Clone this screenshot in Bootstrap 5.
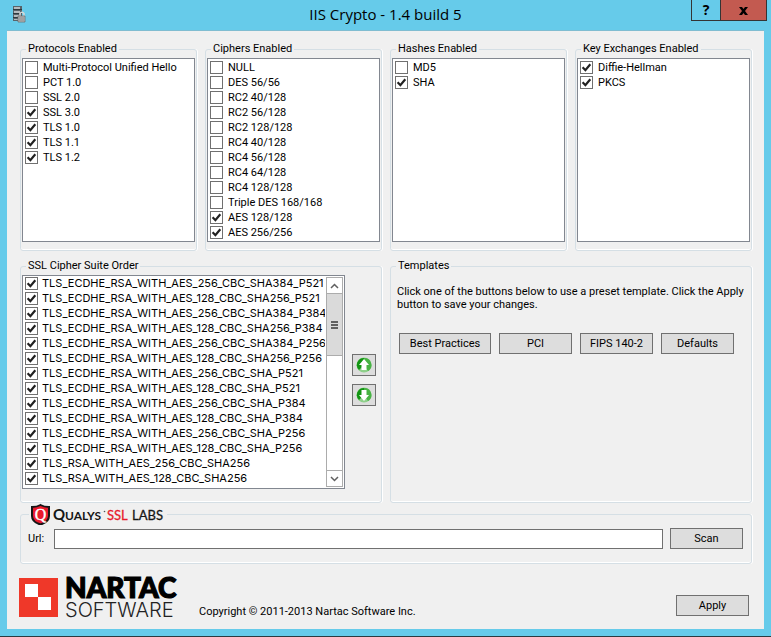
<!DOCTYPE html>
<html lang="en">
<head>
<meta charset="utf-8">
<meta name="viewport" content="width=device-width, initial-scale=1">
<title>IIS Crypto - 1.4 build 5</title>
<link href="https://cdn.jsdelivr.net/npm/bootstrap@5.3.0/dist/css/bootstrap.min.css" rel="stylesheet">
<style>
body { background: #66cbea; font: 11px/15px Roboto, "Liberation Sans", sans-serif; color: #000; border-bottom: 1px solid #2b3a40; }
.titlebar { height: 30px; }
.titlebar h1 { font: 15px/28px "Open Sans", sans-serif; }
.caption-btn { height: 21px; border: 1px solid #343434; border-top: 0; background: #66cbea; width: 30px; font: bold 14px/18px "Open Sans", sans-serif; padding: 0; }
.caption-close { width: 47px; background: #c35a50; margin-left: -1px; }
.caption-set { padding-right: 4px; }
.client { background: #f0f0f0; margin: 0 7px 7px; padding: 10px 12px 11px 13px; border-top: 1px solid #80bdd1; }
.group { border: 1px solid #d5dfe5; border-radius: 3px; box-shadow: inset 0 -1px #fff, 1px 0 #fff; padding: 1px 1px 8px; min-width: 0; }
.group > legend { float: none; width: auto; margin: 0 0 0 4px; padding: 0 2px; font-size: 11px; line-height: 16px; }
.listbox { border: 1px solid #828790; background: #fff; padding: 1px 2px; height: 184px; overflow: hidden; white-space: nowrap; }
.suites { height: 214px; padding: 0 0 0 2px; font-family: Inter, sans-serif; min-width: 0; }
.suite-group { padding-bottom: 13px; }
.second-row { margin-top: 7px; }
.movers { margin: 0 4px 4px 7px; }
.entry { display: flex; align-items: center; gap: 5px; height: 15px; }
.suites .entry { gap: 4px; }
.tick { appearance: none; flex: none; width: 13px; height: 13px; margin: 0; border: 1px solid #707070; background: #fff; }
.tick:checked { background: #fff url("data:image/svg+xml,%3Csvg xmlns='http://www.w3.org/2000/svg' viewBox='0 0 11 11'%3E%3Cpath d='M1.6 5.2 4.4 8.2 9.3 2.2' fill='none' stroke='%23212121' stroke-width='2.2'/%3E%3C/svg%3E"); }
.push { border: 1px solid #707070; background: #ddd; color: #000; height: 21px; width: 73px; padding: 0; line-height: 19px; }
.push-wide { width: 92px; }
.push-icon { width: 24px; height: 22px; }
.scroller { width: 17px; border: 1px solid #acacac; border-top: 0; margin: 1px; flex: none; }
.scroller button { height: 16px; border: 0; border-top: 1px solid #acacac; background: #fff; padding: 0; }
.scroller .thumb { height: 63px; background: #dadada; border: solid #acacac; border-width: 1px 0; }
.templates { padding: 10px 5px 0; }
.hint { line-height: 13px; }
.preset-row { margin-top: 22px; padding-left: 2px; }
.url-label { width: 26px; }
.url-box { border: 1px solid #707070; background: #fff; height: 20px; min-width: 0; padding: 0 3px; }
.group > .brand { margin-left: 7px; line-height: 0; }
.scan { padding: 2px 7px 6px 6px; }
.scan-btn { margin-left: 7px; }
.foot { padding-top: 14px; }
.foot svg { overflow: visible; }
.apply { margin: 0 3px 2px 0; }
.copyright { margin-left: 15px; line-height: 12px; }
</style>
<script src="https://cdn.jsdelivr.net/npm/bootstrap@5.3.0/dist/js/bootstrap.bundle.min.js"></script>
</head>
<body>
<header class="titlebar d-flex align-items-start">
  <div class="flex-fill w-25 ps-2">
    <svg class="d-block ms-1 mt-1" width="16" height="20" viewBox="0 0 16 20" aria-hidden="true">
      <path d="M1 2h9v15H1z" fill="#58636a"/><path d="M2 3h6v2H2zM2 7h6v2H2zM2 11h5v2H2zM2 15h4v1H2z" fill="#b6bbbe"/><path d="M1 5h9v1H1zM1 9h9v1H1zM1 13h7v1H1z" fill="#30383d"/>
      <path d="M8 12V9.500q2-2.500 4 0V12" fill="none" stroke="#d8d8d8" stroke-width="1.500"/><path d="M6 12h7v6H6z" fill="#b9babb" stroke="#666" stroke-width=".7"/><path d="M7 14h5M7 16h5" stroke="#888"/>
    </svg>
  </div>
  <h1 class="m-0">IIS Crypto - 1.4 build 5</h1>
  <div class="flex-fill w-25 d-flex justify-content-end caption-set">
    <button type="button" class="caption-btn" aria-label="Help">?</button>
    <button type="button" class="caption-btn caption-close" aria-label="Close"><svg width="9" height="8" viewBox="0 0 9 8"><path d="M0 0h3l1.500 2L6 0h3L6 4l3 4H6L4.500 6 3 8H0l3-4z"/></svg></button>
  </div>
</header>

<main class="client">
  <div class="row row-cols-4 gx-2">
    <div class="col"><fieldset class="group">
      <legend>Protocols Enabled</legend>
      <div class="listbox">
        <label class="entry"><input class="tick" type="checkbox">Multi-Protocol Unified Hello</label>
        <label class="entry"><input class="tick" type="checkbox">PCT 1.0</label>
        <label class="entry"><input class="tick" type="checkbox">SSL 2.0</label>
        <label class="entry"><input class="tick" type="checkbox" checked>SSL 3.0</label>
        <label class="entry"><input class="tick" type="checkbox" checked>TLS 1.0</label>
        <label class="entry"><input class="tick" type="checkbox" checked>TLS 1.1</label>
        <label class="entry"><input class="tick" type="checkbox" checked>TLS 1.2</label>
      </div>
    </fieldset></div>
    <div class="col"><fieldset class="group">
      <legend>Ciphers Enabled</legend>
      <div class="listbox">
        <label class="entry"><input class="tick" type="checkbox">NULL</label>
        <label class="entry"><input class="tick" type="checkbox">DES 56/56</label>
        <label class="entry"><input class="tick" type="checkbox">RC2 40/128</label>
        <label class="entry"><input class="tick" type="checkbox">RC2 56/128</label>
        <label class="entry"><input class="tick" type="checkbox">RC2 128/128</label>
        <label class="entry"><input class="tick" type="checkbox">RC4 40/128</label>
        <label class="entry"><input class="tick" type="checkbox">RC4 56/128</label>
        <label class="entry"><input class="tick" type="checkbox">RC4 64/128</label>
        <label class="entry"><input class="tick" type="checkbox">RC4 128/128</label>
        <label class="entry"><input class="tick" type="checkbox">Triple DES 168/168</label>
        <label class="entry"><input class="tick" type="checkbox" checked>AES 128/128</label>
        <label class="entry"><input class="tick" type="checkbox" checked>AES 256/256</label>
      </div>
    </fieldset></div>
    <div class="col"><fieldset class="group">
      <legend>Hashes Enabled</legend>
      <div class="listbox">
        <label class="entry"><input class="tick" type="checkbox">MD5</label>
        <label class="entry"><input class="tick" type="checkbox" checked>SHA</label>
      </div>
    </fieldset></div>
    <div class="col"><fieldset class="group">
      <legend>Key Exchanges Enabled</legend>
      <div class="listbox">
        <label class="entry"><input class="tick" type="checkbox" checked>Diffie-Hellman</label>
        <label class="entry"><input class="tick" type="checkbox" checked>PKCS</label>
      </div>
    </fieldset></div>
  </div>

  <div class="row row-cols-2 gx-2 second-row">
    <div class="col"><fieldset class="group suite-group">
      <legend>SSL Cipher Suite Order</legend>
      <div class="d-flex align-items-center">
        <div class="listbox suites d-flex flex-fill">
          <div class="flex-fill overflow-hidden">
            <label class="entry"><input class="tick" type="checkbox" checked>TLS_ECDHE_RSA_WITH_AES_256_CBC_SHA384_P521</label>
            <label class="entry"><input class="tick" type="checkbox" checked>TLS_ECDHE_RSA_WITH_AES_128_CBC_SHA256_P521</label>
            <label class="entry"><input class="tick" type="checkbox" checked>TLS_ECDHE_RSA_WITH_AES_256_CBC_SHA384_P384</label>
            <label class="entry"><input class="tick" type="checkbox" checked>TLS_ECDHE_RSA_WITH_AES_128_CBC_SHA256_P384</label>
            <label class="entry"><input class="tick" type="checkbox" checked>TLS_ECDHE_RSA_WITH_AES_256_CBC_SHA384_P256</label>
            <label class="entry"><input class="tick" type="checkbox" checked>TLS_ECDHE_RSA_WITH_AES_128_CBC_SHA256_P256</label>
            <label class="entry"><input class="tick" type="checkbox" checked>TLS_ECDHE_RSA_WITH_AES_256_CBC_SHA_P521</label>
            <label class="entry"><input class="tick" type="checkbox" checked>TLS_ECDHE_RSA_WITH_AES_128_CBC_SHA_P521</label>
            <label class="entry"><input class="tick" type="checkbox" checked>TLS_ECDHE_RSA_WITH_AES_256_CBC_SHA_P384</label>
            <label class="entry"><input class="tick" type="checkbox" checked>TLS_ECDHE_RSA_WITH_AES_128_CBC_SHA_P384</label>
            <label class="entry"><input class="tick" type="checkbox" checked>TLS_ECDHE_RSA_WITH_AES_256_CBC_SHA_P256</label>
            <label class="entry"><input class="tick" type="checkbox" checked>TLS_ECDHE_RSA_WITH_AES_128_CBC_SHA_P256</label>
            <label class="entry"><input class="tick" type="checkbox" checked>TLS_RSA_WITH_AES_256_CBC_SHA256</label>
            <label class="entry"><input class="tick" type="checkbox" checked>TLS_RSA_WITH_AES_128_CBC_SHA256</label>
          </div>
          <div class="scroller d-flex flex-column">
            <button type="button" aria-label="Scroll up"><svg class="d-block mx-auto" width="9" height="6" viewBox="0 0 9 6"><path d="M1 5l3.500-3.500L8 5" fill="none" stroke="#606060" stroke-width="1.500"/></svg></button>
            <div class="thumb d-flex align-items-center justify-content-center"><svg width="7" height="8" viewBox="0 0 7 8"><path d="M0 1h7M0 4h7M0 7h7" stroke="#606060" stroke-width="2"/></svg></div>
            <button type="button" class="mt-auto" aria-label="Scroll down"><svg class="d-block mx-auto" width="9" height="6" viewBox="0 0 9 6"><path d="M1 1l3.500 3.500L8 1" fill="none" stroke="#606060" stroke-width="1.500"/></svg></button>
          </div>
        </div>
        <div class="d-flex flex-column gap-2 movers">
          <button type="button" class="push push-icon" aria-label="Move up"><svg class="d-block mx-auto" width="16" height="16" viewBox="0 0 16 16"><circle cx="8" cy="8" r="7.500" fill="#8fd08b"/><path d="M8 1A7 7 0 0 0 3 13L8 8V1z" fill="#129512"/><path d="M8 1A7 7 0 0 1 12 14L8 8z" fill="#48b344"/><path d="M8 2l5 6h-2.500v5h-5V8H3z" fill="#fff"/></svg></button>
          <button type="button" class="push push-icon" aria-label="Move down"><svg class="d-block mx-auto" width="16" height="16" viewBox="0 0 16 16"><circle cx="8" cy="8" r="7.500" fill="#8fd08b"/><path d="M8 1A7 7 0 0 0 3 13L8 8V1z" fill="#129512"/><path d="M8 1A7 7 0 0 1 12 14L8 8z" fill="#48b344"/><path d="M8 14l5-6h-2.500V3h-5v5H3z" fill="#fff"/></svg></button>
        </div>
      </div>
    </fieldset></div>
    <div class="col"><fieldset class="group h-100">
      <legend>Templates</legend>
      <div class="templates">
        <p class="hint m-0">Click one of the buttons below to use a preset template. Click the Apply button to save your changes.</p>
        <div class="preset-row d-flex gap-2">
          <button type="button" class="push push-wide">Best Practices</button>
          <button type="button" class="push">PCI</button>
          <button type="button" class="push">FIPS 140-2</button>
          <button type="button" class="push">Defaults</button>
        </div>
      </div>
    </fieldset></div>
  </div>

  <fieldset class="group">
    <legend class="brand"><svg width="134" height="22" viewBox="0 0 134 22" role="img" aria-label="Qualys SSL Labs">
      <path d="M1 4q5 0 8.500-2Q13 4 18 4v9q0 6-8.500 8.500Q1 19 1 13z" fill="#e8192c" stroke="#161616" stroke-width="2"/>
      <text x="9.500" y="17" text-anchor="middle" font-family="Liberation Serif, serif" font-size="16" fill="#fff" stroke="#fff" stroke-width=".4">Q</text>
      <g font-family="Lato, sans-serif" fill="#161616"><text x="22" y="17" font-size="15" font-weight="700">Q</text><text x="34" y="17" font-size="12" font-weight="700">UALYS</text><text x="76" y="17" font-size="13" fill="#e8192c" stroke="#e8192c" stroke-width=".3">SSL</text><text x="101" y="17" font-size="13" stroke="#161616" stroke-width=".3">LABS</text></g>
      <circle cx="73.500" cy="8.500" r=".8" fill="#555"/>
    </svg></legend>
    <div class="scan d-flex align-items-center">
      <label class="url-label" for="url">Url:</label>
      <input id="url" class="url-box flex-fill" type="text">
      <button type="button" class="push scan-btn">Scan</button>
    </div>
  </fieldset>

  <footer class="foot d-flex align-items-end">
    <svg width="164" height="40" viewBox="0 0 164 40" role="img" aria-label="Nartac Software">
      <path d="M-1 0h39v39H-1z" fill="#ef3829"/><path d="M5 6h13v13h13v13H18V19H5z" fill="#fff"/>
      <text x="45" y="20" font-family="Lato, sans-serif" font-weight="900" font-size="28" stroke="#000" stroke-width="1.200">NARTAC</text>
      <text x="45" y="39" font-family="Inter, sans-serif" font-weight="300" font-size="20" fill="#222">SOFTWARE</text>
    </svg>
    <span class="copyright">Copyright © 2011-2013 Nartac Software Inc.</span>
    <button type="button" class="push ms-auto apply">Apply</button>
  </footer>
</main>
</body>
</html>
